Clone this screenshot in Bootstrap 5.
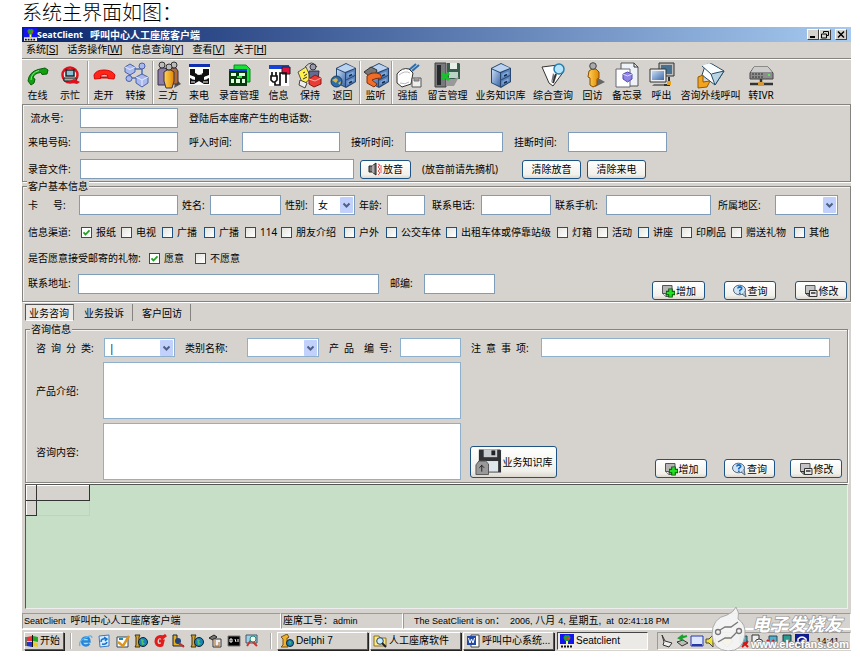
<!DOCTYPE html>
<html lang="zh-CN">
<head>
<meta charset="utf-8">
<meta name="viewport" content="width=device-width, initial-scale=1">
<title>SeatClient 呼叫中心人工座席客户端</title>
<link rel="stylesheet" href="https://cdn.jsdelivr.net/npm/bootstrap@5.3.0/dist/css/bootstrap.min.css">
<style>
  :root { --face:#d6d3ce; --edge:#7f9db9; --dark:#85837f; }
  body { background:#fff; color:#000; font:10px/12px "Noto Sans","Noto Sans CJK SC",sans-serif; white-space:nowrap; overflow-x:hidden; }
  h1 { font:300 20px/24px "Noto Sans CJK SC",sans-serif; height:27px; margin:0; padding:0 0 3px 22px; }
  .win { margin:0 9px 0 22px; background:var(--face); position:relative; }
  .titlebar { height:15px; background:linear-gradient(90deg,#0a246a,#a6caf0); color:#fff; font-weight:700; padding-left:2px; }
  .titlebar .lat { font-size:9px; margin-right:7px; }
  .cap { width:12px; height:11px; padding:0; border:1px solid; border-color:#fff #404040 #404040 #fff; background:var(--face); display:flex; }
  .menubar { height:16px; gap:9px; padding-left:4px; }
  .menubar, .status, .task { font-family:"Liberation Sans","Noto Sans CJK SC",sans-serif; }
  .menubar a { color:#000; text-decoration:none; }
  .tools { display:grid; height:46px; border-top:1px solid var(--dark); box-shadow:inset 0 1px #fff; padding-top:2px;
    grid-template-columns:31fr 34fr 32fr 33fr 31fr 32fr 48fr 31fr 32fr 33fr 32fr 32fr 49fr 57fr 48fr 31fr 38fr 31fr 67fr 34fr 73fr; }
  .tools button { border:0; background:none; padding:0; min-width:0; display:flex; flex-direction:column; align-items:center; color:#000; font-size:10px; line-height:12px; }
  .tools button.sep { border-left:1px solid #a09e9a; box-shadow:inset 1px 0 #fff; }
  .tools svg { width:28px; height:28px; flex:none; }
  .panel { border:1px solid var(--dark); box-shadow:inset 1px 1px #f4f3f1,1px 1px #fff; position:relative; min-width:0; }
  .panel legend { float:none; position:absolute; top:-7px; left:4px; width:auto; margin:0; padding:0 1px; font-size:10px; line-height:12px; background:var(--face); }
  .fr { display:grid; align-items:center; }
  .fr > * { min-width:0; }
  .fr label, .fr span.t { padding-left:11px; }
  .fr > label:first-child, .fr > .lead-t { padding-left:5px; }
  .form-control, .form-select { height:20px; min-height:0; border:1px solid var(--edge); border-radius:0; padding:0 4px; font-size:10px; line-height:14px; color:#000; background-color:#fff; }
  .form-select { background:#fff url("data:image/svg+xml,%3Csvg xmlns='http://www.w3.org/2000/svg' width='13' height='16'%3E%3Crect width='13' height='16' rx='1' fill='%23c1d1fb'/%3E%3Cpath d='M3.5 6.5 6.5 9.5 9.5 6.5' fill='none' stroke='%234d6185' stroke-width='2'/%3E%3C/svg%3E") no-repeat right 1px center; }
  textarea.form-control { height:57px; min-height:0; resize:none; }
  .btn { border:1px solid #1d5484; border-radius:3px; padding:0; height:19px; font-size:10px; line-height:12px; color:#000; background:linear-gradient(#fff,#f1f0ea 80%,#dcd8cf); display:flex; align-items:center; justify-content:center; gap:1px; }
  .btn svg { width:14px; height:14px; flex:none; }
  .form-check-input { width:11px; height:11px; margin:0 4px 0 0; border:1px solid #1c5180; border-radius:0 !important; flex:none; background:linear-gradient(135deg,#e3e3de,#fff); float:none; }
  .form-check-input:checked { background:#fff url("data:image/svg+xml,%3Csvg xmlns='http://www.w3.org/2000/svg' viewBox='0 0 9 9'%3E%3Cpath d='M1.5 4.3 3.5 6.5 7.5 2.3' fill='none' stroke='%2321a121' stroke-width='1.8'/%3E%3C/svg%3E") center/9px; border-color:#1c5180; }
  .fr label.ck { padding:0; display:flex; align-items:center; }
  .call { padding:3px 0 2px; }
  .customer { padding:8px 0 1px; margin-top:4px; }
  .r1 { grid-template-columns:57fr 98fr 672fr; height:20px; margin-bottom:4px; }
  .r2 { grid-template-columns:57fr 98fr 64fr 98fr 65fr 98fr 65fr 99fr 183fr; height:20px; margin-bottom:7px; }
  .r3 { grid-template-columns:57fr 274fr 6fr 51fr 111fr 59fr 6fr 59fr 204fr; height:20px; }
  .c1 { grid-template-columns:56fr 99fr 32fr 71fr 32fr 42fr 32fr 38fr 56fr 70fr 55fr 105fr 64fr 63fr 12fr; }
  .c1 > label { padding-left:4px; } .c1 > label.w { padding-left:7px; }
  .c2 { grid-template-columns:58fr 40fr 41fr 42fr 41fr 36fr 63fr 42fr 60fr 111fr 40fr 41fr 43fr 50fr 63fr 56fr; height:14px; margin-top:10px; }
  .c3 { grid-template-columns:126fr 46fr 655fr; height:14px; margin-top:12px; }
  .c4 { grid-template-columns:55fr 301fr 45fr 71fr 157fr 53fr 19fr 52fr 19fr 52fr 3fr; margin-top:9px; height:26px; }
  .c4 > * { align-self:start; } .c4 > label { line-height:18px; } .c4 > .btn { align-self:end; }
  .tabs { height:20px; padding:2px 0 0 3px; }
  .tabs button { border:0; border-right:1px solid var(--dark); border-radius:0; background:none; color:#000; padding:0 8px 0 9px; height:17px; font-size:10px; line-height:14px; }
  .tabs button.active { border:1px solid; border-color:#555 #fff #fff #555; background:#ebe9e6; padding:0 4px 0 3px; margin-right:1px; border-right-color:var(--dark); }
  .consult { margin:7px 3px 0; padding:8px 0 2px; }
  .consult .form-control, .consult .form-select { border-color:#8fb0cc; }
  .s1 { grid-template-columns:78fr 71fr 72fr 72fr 81fr 61fr 80fr 289fr 17fr; height:19px; margin-bottom:5px; }
  .consult .fr > label { padding-left:10px; }
  .s1 .form-control, .s1 .form-select { height:19px; }
  .s2 { grid-template-columns:77fr 358fr 9fr 87fr 98fr 52fr 17fr 51fr 15fr 52fr 5fr; grid-template-rows:57px 57px; row-gap:4px; }
  .s2 .btn { align-self:end; margin-bottom:2px; } .big { height:32px; } .big svg { width:27px; height:28px; }
  .data { margin:1px 3px 0; height:125px; background:#c7dfc7; border:1px solid #555; border-right-color:#eee; border-bottom-color:#eee; }
  .data table { border-collapse:collapse; }
  .data th { height:15px; background:var(--face); border:1px solid #333; border-left-color:#fff; border-top-color:#fff; padding:0; }
  .data td { height:15px; border:1px solid #cbcbc5; padding:0; }
  .data .k { width:10px; } .data .f { width:53px; }
  .status { display:grid; grid-template-columns:259fr 122fr 448fr; height:15px; margin-top:4px; line-height:13px; }
  .status .lat { font-size:9px; }
  .status > div { border:1px solid; border-color:#9c9a96 #fff #fff #9c9a96; padding-left:1px; min-width:0; }
  .status > div:last-child { padding-left:10px; }
  .task { display:grid; grid-template-columns:2fr 40fr 13fr 195fr 5fr 91fr 2fr 91fr 2fr 91fr 3fr 91fr 9fr 194fr; height:22px; margin-top:1px; border-top:1px solid #fff; align-items:center; }
  .task > * { min-width:0; }
  .tb { height:18px; border:1px solid; border-color:#fff #555 #555 #fff; box-shadow:1px 1px #222; background:var(--face); padding:0 2px; font-size:10px; line-height:12px; display:flex; align-items:center; gap:2px; overflow:hidden; color:#000; }
  .tb.on { border-color:#444 #fff #fff #444; background:#eceae7; box-shadow:none; }
  .tb svg { width:14px; height:14px; flex:none; }
  .tb.st { padding:0; gap:1px; }
  .quick { border-right:2px groove #fff; height:16px; display:flex; align-items:center; justify-content:space-between; padding:0 11px 0 2px; }
  .grow-l { border-left:2px groove #fff; height:16px; margin-left:6px; }
  .quick svg, .tray svg { width:14px; height:14px; flex:none; }
  .tray { height:18px; border:1px solid; border-color:#9c9a96 #fff #fff #9c9a96; display:flex; align-items:center; gap:1px; padding-left:2px; }
  .tray time { margin-left:auto; margin-right:11px; font-size:9px; }
  .mark-o { position:absolute; right:0; bottom:0; width:144px; height:46px; pointer-events:none; }
</style>
<script src="https://cdn.jsdelivr.net/npm/bootstrap@5.3.0/dist/js/bootstrap.bundle.min.js"></script>
</head>
<body>
<svg width="0" height="0" class="position-absolute" aria-hidden="true">
  <defs>
    <linearGradient id="gb" x2="1" y2="1"><stop stop-color="#c5dcf5"/><stop offset="1" stop-color="#3f68a8"/></linearGradient>
    <linearGradient id="go" x2="1"><stop stop-color="#ffd45a"/><stop offset="1" stop-color="#e08700"/></linearGradient>
    <symbol id="cab" viewBox="0 0 28 28">
      <path d="M4 7 14 2 24 7 24 21 14 27 4 22Z" fill="#28466f"/><path d="M5 7.500 14 3 23 7 13 11Z" fill="#b9d3f0"/>
      <path d="M5 8.500 13 12V25.500L5 21.500Z" fill="url(#gb)"/><path d="M14 12 23 8V14L14 18.500ZM14 19.500 23 15V20.500L14 25.500Z" fill="#5c86c0"/>
      <path d="M15.500 13 21.500 10.500V13.500L15.500 16ZM15.500 20.500 21.500 17.500V20L15.500 23Z" fill="#86a9d8"/><path d="M17 15 20 13.500M17 22 20 20.500" stroke="#142c50" stroke-width="1.500"/>
    </symbol>
    <symbol id="add" viewBox="0 0 14 14"><path d="M1.500 1.500H11V12.500H5L1.500 9.500Z" fill="#b5b5b5" stroke="#555"/><path d="M1.500 9.500H5V12.500" fill="#eee" stroke="#555"/><path d="M9.500 4.500V13.500M5 9H14" stroke="#064f06" stroke-width="4.500"/><path d="M9.500 5.200V12.800M5.700 9H13.300" stroke="#21df21" stroke-width="2.600"/></symbol>
    <symbol id="ask" viewBox="0 0 14 14"><ellipse cx="6.500" cy="6" rx="6" ry="4.800" fill="#d2e5f6" stroke="#52677c"/><path d="M9 10 13 13 12 7" fill="#aebfce" stroke="#52677c"/><path d="M4.800 4.500Q5 2.800 6.800 2.800 9 3 8.600 4.800L6.800 6.500V7.500M6.800 8.500V10" fill="none" stroke="#126cc4" stroke-width="1.700"/></symbol>
    <symbol id="edit" viewBox="0 0 14 14"><path d="M1.500 1.500H11V12.500H5L1.500 9.500Z" fill="#c4c4c4" stroke="#555"/><path d="M1.500 9.500H5V12" fill="none" stroke="#333"/><path d="M5.500 6.500H13V12.500H5.500Z" fill="#e8e8e8" stroke="#333"/><path d="M7 9H11.500" stroke="#333" stroke-width="1.500"/></symbol>
    <symbol id="seat" viewBox="0 0 14 14"><rect width="14" height="14" fill="#1414ee"/><rect y="10" width="14" height="4" fill="#eee"/><path d="M1 12.500H13" stroke="#111" stroke-width="2" stroke-dasharray="2 1"/><path d="M3.500 3Q5 0 7 1.500 9 0 10.500 3 10.500 6 7 8.500 3.500 6 3.500 3Z" fill="#179c35"/><path d="M5 3H6.500V5H5ZM8 3H9.500V5H8Z" fill="#f33"/><path d="M7 7V10" stroke="#ff4" stroke-width="2"/></symbol>
    <symbol id="floppy" viewBox="0 0 28 28"><path d="M4 1H26L27 2V25H6L4 23Z" fill="#303234"/><path d="M9 1H23V9H9Z" fill="#c9cdd0"/><path d="M17 2H21V7H17Z" fill="#202224"/><path d="M9 13H24V24H9Z" fill="#dde7ec"/><path d="M1 17 4 13H11L14 16V27H1Z" fill="#999" stroke="#555"/><path d="M7 24V17M4.500 20 7 17.500 9.500 20" fill="none" stroke="#222"/></symbol>
    <symbol id="ie" viewBox="0 0 14 14"><path d="M3 7.500H10.500Q10.500 3.500 7 3.500 3 3.800 3 7.500 3.300 11.500 7 11.500 9.300 11.500 10.300 9.500" fill="none" stroke="#2388dd" stroke-width="2.300"/><path d="M1 12Q-1 7 7 3.500 13 0 13 4" fill="none" stroke="#5bb4ee" stroke-width="1.200"/></symbol>
    <symbol id="globe" viewBox="0 0 14 14"><path d="M1 1H6L5 3V11L6 13H1L2 11V3Z" fill="#dda52a" stroke="#3a3217"/><circle cx="9" cy="8" r="4.500" fill="#1a85b5" stroke="#123"/><path d="M7 5 10 6 9 8 11 10 8 11Z" fill="#51c06a"/></symbol>
    <symbol id="temple" viewBox="0 0 14 14"><path d="M1 3 7 0 9 3 8 4H7V11L8 13H1L3 11V5Z" fill="#eeb22c" stroke="#7a5510"/><circle cx="10" cy="9" r="3.500" fill="#1a85b5" stroke="#123"/><path d="M9 7 11 8 10 11Z" fill="#51c06a"/></symbol>
  </defs>
</svg>

<h1>系统主界面如图：</h1>
<main class="win">
  <header class="titlebar d-flex align-items-center">
    <svg width="13" height="13" class="flex-shrink-0"><use href="#seat"/></svg>
    <span class="lat">SeatClient</span><span>呼叫中心人工座席客户端</span>
    <div class="d-flex ms-auto pe-1">
      <button class="cap" aria-label="最小化"><svg viewBox="0 0 10 9"><path d="M2 7H7" stroke="#000" stroke-width="2"/></svg></button>
      <button class="cap" aria-label="还原"><svg viewBox="0 0 10 9"><path d="M3.500 3V1.500H8.500V5.500H7M1.500 4H6.500V8H1.500Z" fill="none" stroke="#000"/></svg></button>
      <button class="cap ms-1" aria-label="关闭"><svg viewBox="0 0 10 9"><path d="M2 1.500 8 7.500M8 1.500 2 7.500" stroke="#000" stroke-width="1.500"/></svg></button>
    </div>
  </header>
  <nav class="menubar d-flex align-items-center">
    <a href="#">系统[<u>S</u>]</a><a href="#">话务操作[<u>W</u>]</a><a href="#">信息查询[<u>Y</u>]</a><a href="#">查看[<u>V</u>]</a><a href="#">关于[<u>H</u>]</a>
  </nav>
  <div class="tools">
    <button><svg viewBox="0 0 28 28"><path d="M4 20Q5 11 14 8.500L21 7 24 9 23 13 18 13.500 17 11.500Q10 12 9 17L11 18 10 22 7 24Z" fill="#12a012" stroke="#096009"/><path d="M7 19Q7 12 15 9.500" fill="none" stroke="#7cf07c"/></svg>在线</button>
    <button><svg viewBox="0 0 28 28"><circle cx="14" cy="14" r="7.500" fill="#eee" stroke="#e0101c" stroke-width="2.500"/><path d="M10 9H18V15H10Z" fill="#8abfd8" stroke="#222" stroke-width="1.500"/><path d="M8 17H20V20H8Z" fill="#aaa" stroke="#222"/><path d="M18 18 24 21 21 23 12 21Z" fill="#e0101c"/></svg>示忙</button>
    <button class="sep"><svg viewBox="0 0 28 28"><path d="M4 14Q6 9 14 9 22 9 25 14L24 18 18 17.500 17.500 14Q14 12.500 11 14L10.500 17.500 4.500 18Z" fill="#ff2517" stroke="#d30808"/><path d="M10 16.500H18" stroke="#d30808" stroke-width="2"/></svg>走开</button>
    <button><svg viewBox="0 0 28 28"><path d="M8 8H20V13M8 8V17H17M20 8V18" fill="none" stroke="#536fae" stroke-width="1.500"/><g fill="#aab8ee" stroke="#4862a6"><path d="M3 6 8 3 13 6V11L8 14 3 11Z"/><circle cx="20" cy="5" r="3"/><circle cx="7" cy="17.500" r="3"/><path d="M14 16 20 13 26 16V22L20 26 14 22Z"/></g><path d="M3 6 8 8.500 13 6M14 16 20 19 26 16M20 19V25" fill="none" stroke="#e7ecff"/></svg>转接</button>
    <button class="sep"><svg viewBox="0 0 28 28"><path d="M20 27 27 23 22 18Z" fill="#555"/><g stroke="#3b3042"><path d="M4 9 7 7H11L13 9V24H4Z" fill="#8c7ca8"/><path d="M15 9 18 7H22L24 10V23H15Z" fill="#b06a35"/><path d="M10 11 13 9H17L20 11V20L18 27H12L10 20Z" fill="url(#go)"/></g><g fill="#bbb" stroke="#333"><circle cx="8" cy="4" r="3"/><circle cx="20" cy="4" r="3"/><circle cx="15" cy="6" r="3"/></g></svg>三方</button>
    <button><svg viewBox="0 0 28 28"><rect x="4" y="3" width="21" height="21" fill="#fff"/><path d="M4 3H25V6H4Z" fill="#1030b0"/><g fill="#111"><path d="M5 8H10V12L14 14 18 12V8H24V14L19 16V19L24 17V23H19L14 20 9 23H5V17L10 19V16L5 14Z"/></g><g fill="#fff"><circle cx="14.500" cy="9" r="2"/><circle cx="8" cy="17" r="1.500"/><circle cx="21" cy="17" r="1.500"/></g><path d="M12 13H17M6 21H10M18 21H23" stroke="#fff"/></svg>来电</button>
    <button><svg viewBox="0 0 28 28"><path d="M9 4H21L25 8V21H9Z" fill="#17df37" stroke="#0a8a20"/><rect x="4" y="8" width="18" height="17" fill="#073a0d"/><path d="M4 8H22V10H4Z" fill="#1744d8"/><path d="M6 12H11V15H6ZM14 12H20V15H14ZM6 18H9V22H6ZM11 18H15V22H11ZM17 18H20V22H17Z" fill="#dfffdf"/><path d="M12 16H17" stroke="#2edf4e" stroke-width="2"/></svg>录音管理</button>
    <button><svg viewBox="0 0 28 28"><rect x="4" y="4" width="20" height="21" fill="#fff"/><path d="M4 4H24V8H4Z" fill="#1744d8"/><path d="M17 6H25V13H17Z" fill="#e6103c" stroke="#222"/><path d="M7 11V15M11 11V15M6 15H12V19L10 21H8L6 19ZM10 21V24H15V12H21V22" fill="none" stroke="#111" stroke-width="1.700"/></svg>信息</button>
    <button><svg viewBox="0 0 28 28"><path d="M9 6Q16-2 21 6" fill="none" stroke="#444"/><path d="M2 11 10 6 15 17 7 24Z" fill="#fff04a" stroke="#555"/><path d="M7 12 9 11M8 15 11 13M7 18 11 16" stroke="#333"/><circle cx="17" cy="6" r="3" fill="#99a" stroke="#334"/><path d="M13 10H23L22 18H13Z" fill="#626b94" stroke="#334"/><path d="M13 18 19 14 25 17V23L18 26 13 23Z" fill="#ea3b35" stroke="#8e1714"/><path d="M13 18 19 20 25 17" stroke="#ffaaa0" fill="none"/><path d="M4 19 11 22 9 27 3 24Z" fill="#eee" stroke="#444"/></svg>保持</button>
    <button><svg viewBox="0 0 28 28"><svg x="3" y="0" width="26" height="28"><use href="#cab"/></svg><circle cx="7.500" cy="20.500" r="5.500" fill="#2b6cae" stroke="#163957"/><path d="M3 19 7 17 9 19 7 22ZM9 22 12 20 11 24Z" fill="#e0b33a"/></svg>返回</button>
    <button class="sep"><svg viewBox="0 0 28 28"><svg x="3" y="0" width="26" height="28"><use href="#cab"/></svg><path d="M2 11 9 6 15 9 13 14 9 12 7 15Z" fill="#777" stroke="#333"/><path d="M5 15Q10 10 18 13L20 17Q13 17 10 19L15 23 12 26 5 22Z" fill="#f06c27" stroke="#7e300e"/></svg>监听</button>
    <button class="sep"><svg viewBox="0 0 28 28"><path d="M15 9 22 3M18 10 25 4" stroke="#2d6fae" stroke-width="2"/><path d="M3 13Q8 6 15 8L19 12 17 23 8 26 3 22Z" fill="#fff" stroke="#333"/><path d="M5 14Q11 9 16 12M6 22Q11 24 15 21" fill="none" stroke="#bbb"/><path d="M18 17H27V26H18Z" fill="#eee" stroke="#555"/><path d="M20 17V20H25V17" fill="#999" stroke="#777"/></svg>强插</button>
    <button><svg viewBox="0 0 28 28"><path d="M1 2H12V26H1Z" fill="#77797c" stroke="#444"/><path d="M3 4H7V24H3Z" fill="#26282a"/><path d="M13 2H25L26 3V18H13Z" fill="#395d4d"/><path d="M16 2H23V8H16Z" fill="#e7efe9"/><path d="M15 11H24V17H15Z" fill="#bbd4c6"/><path d="M12 18H20L25 16 20 25H12Z" fill="#999"/><path d="M8 12 15 19M15 12 8 18" stroke="#17c32b" stroke-width="3"/></svg>留言管理</button>
    <button><svg><use href="#cab"/></svg>业务知识库</button>
    <button><svg viewBox="0 0 28 28"><path d="M3 6 19 4 25 10 14 25 10 22Z" fill="#fff" stroke="#333"/><path d="M14 12 16 15 12 22Z" fill="#777"/><circle cx="20" cy="8" r="5" fill="#b6e5fb" stroke="#247eaf" stroke-width="1.500"/><path d="M17 13 14 22" stroke="#333" stroke-width="2"/></svg>综合查询</button>
    <button><svg viewBox="0 0 28 28"><path d="M16 26 26 21 19 17Z" fill="#666"/><path d="M10 10 13 8H17L20 11V17L18 18V24L14 26 11 24V17L9 16Z" fill="url(#go)" stroke="#8a4b00"/><circle cx="14" cy="5" r="3.300" fill="#aaa" stroke="#444"/></svg>回访</button>
    <button><svg viewBox="0 0 28 28"><path d="M8 2H21L25 6V25H8Z" fill="#eef3f8" stroke="#555"/><path d="M21 2V6H25" fill="none" stroke="#333"/><path d="M3 8H17V26H3Z" fill="#fff" stroke="#667"/><path d="M10 13 14.500 11 19 13V18L14.500 21 10 18Z" fill="#8f84e8" stroke="#5549ad"/><path d="M10 13 14.500 15 19 13" fill="none" stroke="#ddd9ff"/></svg>备忘录</button>
    <button><svg viewBox="0 0 28 28"><path d="M11 2H26V15H11Z" fill="#bdbdbd" stroke="#333"/><path d="M13 4H24V13H13Z" fill="#477191"/><path d="M2 8H18V21H2Z" fill="#eee" stroke="#333"/><path d="M4 10H16V19H4Z" fill="url(#gb)"/><path d="M6 23H16L18 25H4Z" fill="#777"/><path d="M21 16V24H16" stroke="#333" stroke-width="2" fill="none"/><path d="M19 20H23V24H19Z" fill="#e8a21c"/></svg>呼出</button>
    <button><svg viewBox="0 0 28 28"><path d="M8 5Q11 1 15 3L27 10 18 24 5 14Z" fill="#fff" stroke="#274a63"/><path d="M14 13 27 10 18 24Z" fill="#b8d5e5" stroke="#274a63"/><path d="M5 5 12 2 22 8 14 13Z" fill="#f8fdff"/><path d="M5 5 14 13" stroke="#274a63"/><path d="M1 16 6 14V21L13 20 10 26 1 27Z" fill="#f2a320" stroke="#905a06"/></svg>咨询外线呼叫</button>
    <button><svg viewBox="0 0 28 28"><path d="M3 12 7 6H21L26 12V18H3Z" fill="#8d8d8d" stroke="#444"/><path d="M7 6H21L25 11H4Z" fill="#ccc"/><path d="M5 13H17M5 16H17" stroke="#333" stroke-dasharray="2 1"/><circle cx="22" cy="14" r="1" fill="#5f5"/><path d="M14 18V24M3 23H26" stroke="#333" stroke-width="2.500"/><path d="M11 21H17V25H11Z" fill="#d49a3a"/></svg>转IVR</button>
  </div>

  <section class="panel call">
    <div class="fr r1"><label for="sn">&nbsp;流水号:</label><input id="sn" class="form-control"><span class="t">登陆后本座席产生的电话数:</span></div>
    <div class="fr r2"><label for="tel">来电号码:</label><input id="tel" class="form-control"><label for="ti">呼入时间:</label><input id="ti" class="form-control"><label for="ta">接听时间:</label><input id="ta" class="form-control"><label for="th">挂断时间:</label><input id="th" class="form-control"></div>
    <div class="fr r3"><label for="rec">录音文件:</label><input id="rec" class="form-control"><i></i>
      <button class="btn"><svg viewBox="0 0 14 14"><path d="M1 4H4L8 1V13L4 10H1Z" fill="#777" stroke="#222"/><path d="M5 3V11" stroke="#ddd"/><path d="M10 2 12 3 10 5 12 7 10 9 12 11 10 13M13 3V11" fill="none" stroke="#f05555"/></svg>放音</button>
      <span class="t">(放音前请先摘机)</span><button class="btn">清除放音</button><i></i><button class="btn">清除来电</button></div>
  </section>

  <fieldset class="panel customer"><legend>客户基本信息</legend>
    <div class="fr c1"><label for="card">卡&emsp;&ensp;号:</label><input id="card" class="form-control"><label for="nm">姓名:</label><input id="nm" class="form-control"><label for="sex">性别:</label><select id="sex" class="form-select"><option>女</option><option>男</option></select><label for="age">年龄:</label><input id="age" class="form-control"><label class="w" for="ph">联系电话:</label><input id="ph" class="form-control"><label for="mb">联系手机:</label><input id="mb" class="form-control"><label class="w" for="area">所属地区:</label><select id="area" class="form-select"><option></option></select></div>
    <div class="fr c2"><span class="lead-t">信息渠道:</span>
      <label class="ck"><input type="checkbox" class="form-check-input" checked>报纸</label><label class="ck"><input type="checkbox" class="form-check-input">电视</label><label class="ck"><input type="checkbox" class="form-check-input">广播</label><label class="ck"><input type="checkbox" class="form-check-input">广播</label><label class="ck"><input type="checkbox" class="form-check-input">114</label><label class="ck"><input type="checkbox" class="form-check-input">朋友介绍</label><label class="ck"><input type="checkbox" class="form-check-input">户外</label><label class="ck"><input type="checkbox" class="form-check-input">公交车体</label><label class="ck"><input type="checkbox" class="form-check-input">出租车体或停靠站级</label><label class="ck"><input type="checkbox" class="form-check-input">灯箱</label><label class="ck"><input type="checkbox" class="form-check-input">活动</label><label class="ck"><input type="checkbox" class="form-check-input">讲座</label><label class="ck"><input type="checkbox" class="form-check-input">印刷品</label><label class="ck"><input type="checkbox" class="form-check-input">赠送礼物</label><label class="ck"><input type="checkbox" class="form-check-input">其他</label></div>
    <div class="fr c3"><span class="lead-t">是否愿意接受邮寄的礼物:</span><label class="ck"><input type="checkbox" class="form-check-input" checked>愿意</label><label class="ck"><input type="checkbox" class="form-check-input">不愿意</label></div>
    <div class="fr c4"><label for="adr">联系地址:</label><input id="adr" class="form-control"><label for="zip">邮编:</label><input id="zip" class="form-control"><i></i><button class="btn"><svg><use href="#add"/></svg>增加</button><i></i><button class="btn"><svg><use href="#ask"/></svg>查询</button><i></i><button class="btn"><svg><use href="#edit"/></svg>修改</button></div>
  </fieldset>

  <div class="tabs d-flex" role="tablist"><button class="active" role="tab">业务咨询</button><button role="tab">业务投诉</button><button role="tab">客户回访</button></div>

  <fieldset class="panel consult"><legend>咨询信息</legend>
    <div class="fr s1"><label for="q1">咨&ensp;询&ensp;分&ensp;类:</label><select id="q1" class="form-select"><option>|</option></select><label for="q2">类别名称:</label><select id="q2" class="form-select"><option></option></select><label for="q3">产&ensp;品&emsp;编&ensp;号:</label><input id="q3" class="form-control"><label for="q4">注&ensp;意&ensp;事&ensp;项:</label><input id="q4" class="form-control"></div>
    <div class="fr s2"><label for="x1">产品介绍:</label><textarea id="x1" class="form-control"></textarea><i></i><i></i><i></i><i></i><i></i><i></i><i></i><i></i><i></i>
      <label for="x2">咨询内容:</label><textarea id="x2" class="form-control"></textarea><i></i><button class="btn big"><svg><use href="#floppy"/></svg>业务知识库</button><i></i><button class="btn"><svg><use href="#add"/></svg>增加</button><i></i><button class="btn"><svg><use href="#ask"/></svg>查询</button><i></i><button class="btn"><svg><use href="#edit"/></svg>修改</button></div>
  </fieldset>

  <div class="data"><table><thead><tr><th class="k"></th><th class="f"></th></tr></thead><tbody><tr><th class="k"></th><td class="f"></td></tr></tbody></table></div>

  <div class="status"><div><span class="lat">SeatClient</span>&ensp;呼叫中心人工座席客户端</div><div>座席工号：<span class="lat">admin</span></div><div><span class="lat">The SeatClient is on</span>：&ensp;<span class="lat">2006,</span> 八月 <span class="lat">4,</span> 星期五,&ensp;<span class="lat">at&ensp;02:41:18 PM</span></div></div>
  <footer class="task"><i></i>
    <button class="tb st"><svg viewBox="0 0 14 14"><path d="M2 3 7 2V7H2Z" fill="#e33"/><path d="M8 2 13 3V8L8 7Z" fill="#2a2"/><path d="M2 8H7V13L2 12Z" fill="#23c"/><path d="M8 8 13 9V13L8 12Z" fill="#ec2"/><path d="M1 3V12M7.500 1V13" stroke="#111"/></svg>开始</button><span class="grow-l"></span>
    <div class="quick">
      <svg><use href="#ie"/></svg>
      <svg viewBox="0 0 14 14"><path d="M2 2 12 1V12L3 13Z" fill="#d9ecff" stroke="#3c78c0"/><path d="M4 8Q4 4 9 5M7 3 10 5 8 7M10 8Q9 11 5 10" fill="none" stroke="#1675c9" stroke-width="1.500"/></svg>
      <svg viewBox="0 0 14 14"><path d="M1 3H12V13H1Z" fill="#fff" stroke="#345"/><path d="M2 8 7 12 13 2" fill="none" stroke="#db961f" stroke-width="2.500"/><path d="M3 5H7" stroke="#28a" stroke-width="2"/></svg>
      <svg><use href="#globe"/></svg>
      <svg viewBox="0 0 14 14"><path d="M11 3Q3 1 3 8 4 13 9 11L10 7H6M8 5 13 1" fill="none" stroke="#e21c1c" stroke-width="3"/></svg>
      <svg viewBox="0 0 14 14"><path d="M2 1H6V9L13 12H2Z" fill="#e4b02b" stroke="#222"/><circle cx="7" cy="7" r="3" fill="#247" /><path d="M8 9 13 13" stroke="#b33" stroke-width="2"/></svg>
      <svg><use href="#globe"/></svg>
      <svg viewBox="0 0 14 14"><path d="M1 4 6 1 9 3 5 6Z" fill="#777" stroke="#222"/><path d="M5 5H13V13H5Z" fill="#eee" stroke="#333"/><path d="M7 6V12H11V8" fill="none" stroke="#a62"/></svg>
      <svg viewBox="0 0 14 14"><path d="M1 2H13V12H1Z" fill="#000" stroke="#777"/><path d="M3 5H5V8H3ZM8 5 9 8M11 5V8" stroke="#fff" fill="none"/></svg>
      <svg viewBox="0 0 14 14"><path d="M1 1H12V9H1Z" fill="#9cd1ea" stroke="#456"/><path d="M2 12 6 6 9 9 12 12" fill="none" stroke="#c33" stroke-width="2"/><circle cx="8" cy="5" r="3" fill="#efe" stroke="#287"/></svg>
    </div><i></i>
    <button class="tb"><svg><use href="#temple"/></svg>Delphi 7</button><i></i>
    <button class="tb"><svg viewBox="0 0 14 14"><path d="M1 2H6L7 4H13V12H1Z" fill="#ffe783" stroke="#8d751b"/><circle cx="7" cy="7" r="3.300" fill="#c9edff" stroke="#247"/><path d="M9 9 13 13" stroke="#222" stroke-width="2"/></svg>人工座席软件</button><i></i>
    <button class="tb"><svg viewBox="0 0 14 14"><path d="M5 1H13V13H5Z" fill="#fff" stroke="#444"/><path d="M1 2H10V11H1Z" fill="#2349a6"/><path d="M2.500 4 4 9 5.500 5 7 9 8.500 4" fill="none" stroke="#fff"/></svg>呼叫中心系统...</button><i></i>
    <button class="tb on"><svg><use href="#seat"/></svg>Seatclient</button><i></i>
    <div class="tray">
      <svg viewBox="0 0 14 14"><path d="M2 1 5 7 12 9 9 13 3 11 4 8Z" fill="#eee" stroke="#333"/></svg>
      <svg viewBox="0 0 14 14"><path d="M2 8 8 6 13 9 7 12Z" fill="#bbb" stroke="#333"/><path d="M12 2 5 4M8 1 4 4 8 6" stroke="#17a32c" stroke-width="2" fill="none"/></svg>
      <svg viewBox="0 0 14 14"><path d="M1 2H13V12H1Z" fill="#dce6ff" stroke="#2836a8"/><path d="M2 11H12" stroke="#2836a8" stroke-width="2"/></svg>
      <svg viewBox="0 0 14 14"><path d="M1 5H4L8 1V13L4 9H1Z" fill="#f4e231" stroke="#444"/><path d="M10 4Q12 7 10 10" fill="none" stroke="#333"/></svg>
      <svg viewBox="0 0 14 14"><path d="M7 1 13 7 7 13 1 7Z" fill="#f5e14c" stroke="#777"/></svg>
      <svg viewBox="0 0 14 14"><path d="M5 2H12V10H5Z" fill="#3bb0c0" stroke="#345"/><path d="M7 7 13 13M13 7 7 13" stroke="#d11" stroke-width="2"/></svg>
      <svg viewBox="0 0 14 14"><path d="M2 1H9V11H2Z" fill="#eee" stroke="#333"/><circle cx="9" cy="9" r="4" fill="#fff" stroke="#333"/><path d="M8 7V11L11 9Z" fill="#1a2"/></svg>
      <svg viewBox="0 0 14 14"><path d="M4 2H12V9H4Z" fill="#49b2d0" stroke="#345"/><path d="M2 6 9 13M9 6 2 13" stroke="#d11" stroke-width="2"/></svg>
      <svg viewBox="0 0 14 14"><path d="M3 1H11V8H3Z" fill="#2c9a8c" stroke="#234"/><path d="M2 12H9" stroke="#333" stroke-width="2"/><path d="M8 8 13 13M13 8 8 13" stroke="#d11" stroke-width="2"/></svg>
      <svg viewBox="0 0 14 14"><rect width="14" height="14" fill="#101b8c"/><path d="M3 9V5Q7 1 11 5V9M5 10H9" fill="none" stroke="#fff" stroke-width="1.500"/></svg>
      <time>14:41</time>
    </div>
  </footer>
  <svg class="mark-o" viewBox="0 0 144 46" aria-hidden="true">
    <path d="M5 30Q5 13 20 10 27 7 29 2 33 8 31 14 39 19 38 30 36 46 21 46 6 45 5 30Z" fill="#f5f5f5" fill-opacity=".93" stroke="#aaa"/>
    <g fill="none" stroke="#777" stroke-width="1.300"><circle cx="11" cy="27" r="2.500"/><path d="M13 25 18 22H24L31 17M11 37 18 33H24L30 27"/><circle cx="32" cy="26" r="2.500"/></g>
    <g font-family="Noto Sans CJK SC,sans-serif" font-weight="700" fill="#fff" stroke="#999" stroke-width="1.500" paint-order="stroke"><text x="45" y="26" font-size="18" font-style="italic">电子发烧友</text><text x="44" y="43" font-size="11" font-family="Liberation Sans,sans-serif">www.elecfans.com</text></g>
  </svg>
</main>
</body>
</html>
